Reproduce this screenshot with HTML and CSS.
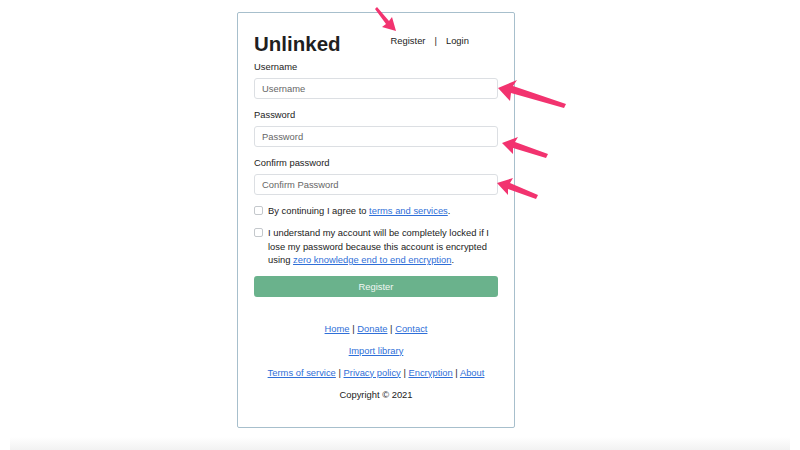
FILE: index.html
```html
<!DOCTYPE html>
<html>
<head>
<meta charset="utf-8">
<link rel="stylesheet" href="styles.css">
</head>
<body>
<div class="page">
  <div class="card">
    <div class="header">
      <h1 class="title">Unlinked</h1>
      <nav class="nav"><span>Register</span><span class="sep">|</span><span>Login</span></nav>
    </div>
    <label class="label">Username</label>
    <div class="input">Username</div>
    <label class="label">Password</label>
    <div class="input">Password</div>
    <label class="label">Confirm password</label>
    <div class="input">Confirm Password</div>
    <div class="check first"><span class="box"></span><p>By continuing I agree to <a href="#">terms and services</a>.</p></div>
    <div class="check"><span class="box"></span><p>I understand my account will be completely locked if I lose my password because this account is encrypted using <a href="#">zero knowledge end to end encryption</a>.</p></div>
    <div class="btn">Register</div>
    <div class="footer">
      <p><a href="#">Home</a> | <a href="#">Donate</a> | <a href="#">Contact</a></p>
      <p><a href="#">Import library</a></p>
      <p><a href="#">Terms of service</a> | <a href="#">Privacy policy</a> | <a href="#">Encryption</a> | <a href="#">About</a></p>
      <p class="copy">Copyright © 2021</p>
    </div>
  </div>
  <div class="strip"></div>
</div>
<svg class="arrows" width="800" height="450" viewBox="0 0 800 450">
  <g fill="#f2336f">
    <polygon points="375,9 377,7 389,21 392,17 396,31 382,27 386,24"/>
    <polygon points="498,88 517,80 513,86 566,104 564,108 511,93 510,101"/>
    <polygon points="502,143 518,137 515,142 548,154 546,158 513,148 513,154"/>
    <polygon points="497,183 513,178 510,183 538,195 536,199 508,189 508,195"/>
  </g>
</svg>
</body>
</html>
```
FILE: styles.css
```css
* { box-sizing: border-box; }
html, body { margin: 0; padding: 0; background: #fff; }
body {
  font-family: "Liberation Sans", Arial, sans-serif;
  color: #222;
  width: 800px;
  height: 450px;
  overflow: hidden;
  position: relative;
}
.page {
  display: flex;
  flex-direction: column;
  align-items: flex-start;
  padding-top: 12px;
}
.card {
  margin-left: 237px;
  width: 278px;
  height: 416px;
  border: 1px solid #a7bfcc;
  border-radius: 2px;
  padding: 17px 16px 0 16px;
  display: flex;
  flex-direction: column;
}
.header {
  display: flex;
  align-items: flex-start;
  margin-bottom: 3px;
}
.title {
  margin: 0;
  font-size: 20.5px;
  font-weight: 700;
  line-height: 28px;
  color: #1f1f1f;
}
.nav {
  margin-left: 50px;
  margin-top: 5px;
  font-size: 9.4px;
  color: #222;
  display: flex;
  gap: 9px;
}
.label {
  font-size: 9.4px;
  line-height: 12px;
  color: #222;
}
.input {
  margin-top: 5px;
  height: 21px;
  border: 1px solid #dcdfe3;
  border-radius: 3px;
  font-size: 9.4px;
  color: #666;
  padding: 0 7px;
  display: flex;
  align-items: center;
  margin-bottom: 10px;
}
.check {
  display: flex;
  align-items: flex-start;
  gap: 5px;
  font-size: 9.4px;
  line-height: 13.5px;
  color: #222;
  margin-top: 8.5px;
}
.check.first { margin-top: -1px; }
.check p { margin: 0; }
.box {
  flex: none;
  width: 9px;
  height: 9px;
  border: 1px solid #c4c8cc;
  border-radius: 2px;
  margin-top: 2px;
}
a { color: #2f6fd8; text-decoration: underline; }
.btn {
  margin-top: 9px;
  height: 21px;
  background: #6ab28c;
  border-radius: 3px;
  color: #f2f7f4;
  font-size: 9.4px;
  display: flex;
  align-items: center;
  justify-content: center;
}
.footer {
  margin-top: 26px;
  text-align: center;
  font-size: 9.4px;
  color: #222;
}
.footer p { margin: 0 0 10px 0; line-height: 12px; }
.strip {
  margin-top: 9px;
  margin-left: 10px;
  width: 780px;
  height: 14px;
  background: linear-gradient(#ffffff, #f1f1f1);
}
.arrows {
  position: absolute;
  left: 0;
  top: 0;
  pointer-events: none;
}
```
